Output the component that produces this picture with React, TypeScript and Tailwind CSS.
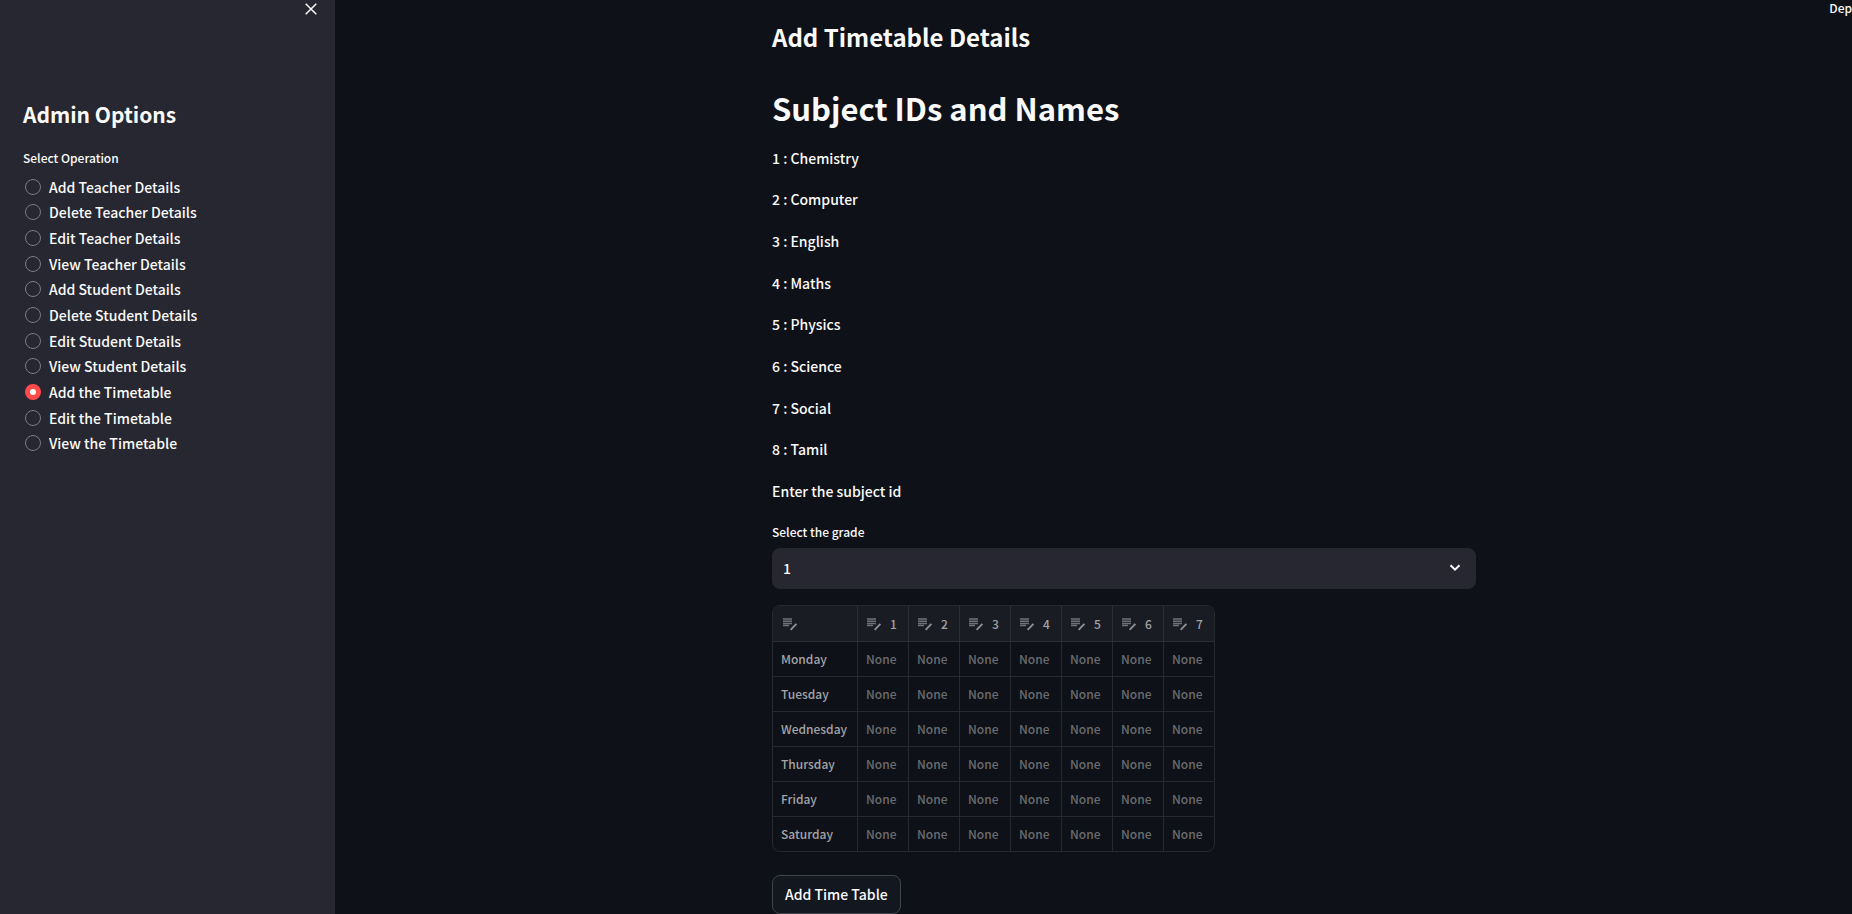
import { useState } from "react";

const operations = [
  "Add Teacher Details",
  "Delete Teacher Details",
  "Edit Teacher Details",
  "View Teacher Details",
  "Add Student Details",
  "Delete Student Details",
  "Edit Student Details",
  "View Student Details",
  "Add the Timetable",
  "Edit the Timetable",
  "View the Timetable",
];

const subjects = ["Chemistry", "Computer", "English", "Maths", "Physics", "Science", "Social", "Tamil"];
const days = ["Monday", "Tuesday", "Wednesday", "Thursday", "Friday", "Saturday"];
const periods = [1, 2, 3, 4, 5, 6, 7];

function EditNoteIcon() {
  return (
    <svg viewBox="0 0 16 14" className="h-[14px] w-4 shrink-0" fill="none" aria-hidden="true">
      <path d="M1 2h9M1 4.200h9M1 6.400h9M1 8.600h6" stroke="#707176" strokeWidth="1.500" />
      <path d="M8.600 12.800l5.800-6" stroke="#8e8f92" strokeWidth="1.900" />
    </svg>
  );
}

function Sidebar() {
  const [selected, setSelected] = useState("Add the Timetable");
  return (
    <aside className="w-[335px] shrink-0 bg-[#262730]">
      <div className="flex h-[18px] justify-end pr-[17px]">
        <button type="button" aria-label="Close sidebar" className="flex w-[14px] items-center justify-center">
          <svg viewBox="0 0 12 12" className="size-3" fill="none" stroke="#fafafa" strokeWidth="1.5" aria-hidden="true">
            <path d="M.7.7l10.6 10.6M11.3.7L.7 11.3" />
          </svg>
        </button>
      </div>
      <div className="px-[23px] pt-20">
        <h2 className="text-[21px] leading-8 font-bold">Admin Options</h2>
        <fieldset className="mt-4">
          <legend className="text-[12px] leading-6 font-medium">Select Operation</legend>
          <div className="mt-1 grid h-[282px] auto-rows-fr">
            {operations.map((op) => (
              <label key={op} className="flex items-center gap-2 pl-[2px] text-[14px] leading-6 font-medium">
                <input
                  type="radio"
                  name="operation"
                  checked={selected === op}
                  onChange={() => setSelected(op)}
                  className="size-4 shrink-0 appearance-none rounded-full border border-[#7a7b83] checked:border-5 checked:border-[#ff4b4b] checked:bg-white"
                />
                {op}
              </label>
            ))}
          </div>
        </fieldset>
      </div>
    </aside>
  );
}

function Timetable() {
  return (
    <div className="mt-4 w-fit overflow-hidden rounded-lg border border-[#27292f]">
      <table className="border-separate border-spacing-0 text-left text-[12px] leading-5">
        <thead className="bg-[#1a1c24] text-[#a3a4a8]">
          <tr className="h-9">
            <th className="w-[85px] border-r border-b border-[#2c2e34] p-0 pl-[9px] font-medium" aria-label="Day">
              <EditNoteIcon />
            </th>
            {periods.map((p) => (
              <th key={p} className="w-[51px] border-r border-b border-[#2c2e34] p-0 pl-2 font-medium last:w-[50px] last:border-r-0">
                <div className="flex items-center gap-2">
                  <EditNoteIcon />
                  {p}
                </div>
              </th>
            ))}
          </tr>
        </thead>
        <tbody>
          {days.map((day) => (
            <tr key={day} className="group h-[35px] last:h-[34px]">
              <th scope="row" className="border-r border-b border-[#27292f] p-0 pl-2 font-medium text-[#a3a4a8] group-last:border-b-0">
                {day}
              </th>
              {periods.map((p) => (
                <td key={p} className="border-r border-b border-[#27292f] p-0 pl-2 font-medium text-[#6b6c70] group-last:border-b-0 last:border-r-0">
                  None
                </td>
              ))}
            </tr>
          ))}
        </tbody>
      </table>
    </div>
  );
}

export default function App() {
  return (
    <div className="flex h-screen overflow-hidden bg-[#0e1117] font-['Noto_Sans_CJK_JP',sans-serif] text-[#fafafa]">
      <Sidebar />
      <div className="flex min-w-0 flex-1 flex-col">
        <header className="flex h-[18px] shrink-0 justify-end text-[12px] leading-4 font-medium">
          <a href="#deploy">Dep</a>
        </header>
        <main className="pl-[61px]">
          <div className="mx-auto max-w-[704px]">
            <h2 className="text-[24px] leading-[38px] font-bold">Add Timetable Details</h2>
            <h1 className="mt-7 text-[31px] leading-[48px] font-bold">Subject IDs and Names</h1>
            <div className="mt-[5px] grid h-[375px] auto-rows-fr items-center text-[14px] leading-6 font-medium">
              {subjects.map((s, i) => (
                <p key={s}>
                  {i + 1} : {s}
                </p>
              ))}
              <p>Enter the subject id</p>
            </div>
            <label htmlFor="grade" className="mt-2 block text-[12px] leading-6 font-medium">
              Select the grade
            </label>
            <div className="relative mt-1">
              <select id="grade" defaultValue="1" className="block h-[41px] w-full appearance-none rounded-lg bg-[#262730] px-[11px] text-[14px] font-medium">
                <option>1</option>
                <option>2</option>
                <option>3</option>
              </select>
              <svg viewBox="0 0 12 8" className="pointer-events-none absolute top-4 right-[15px] h-2 w-3" fill="none" stroke="#fafafa" strokeWidth="2" aria-hidden="true">
                <path d="M1.5 1.2L6 5.7l4.500-4.500" />
              </svg>
            </div>
            <Timetable />
            <button type="button" className="mt-[23px] h-[39px] rounded-lg border border-[#41444c] bg-[#131720] px-3 text-[14px] font-medium">
              Add Time Table
            </button>
          </div>
        </main>
      </div>
    </div>
  );
}
